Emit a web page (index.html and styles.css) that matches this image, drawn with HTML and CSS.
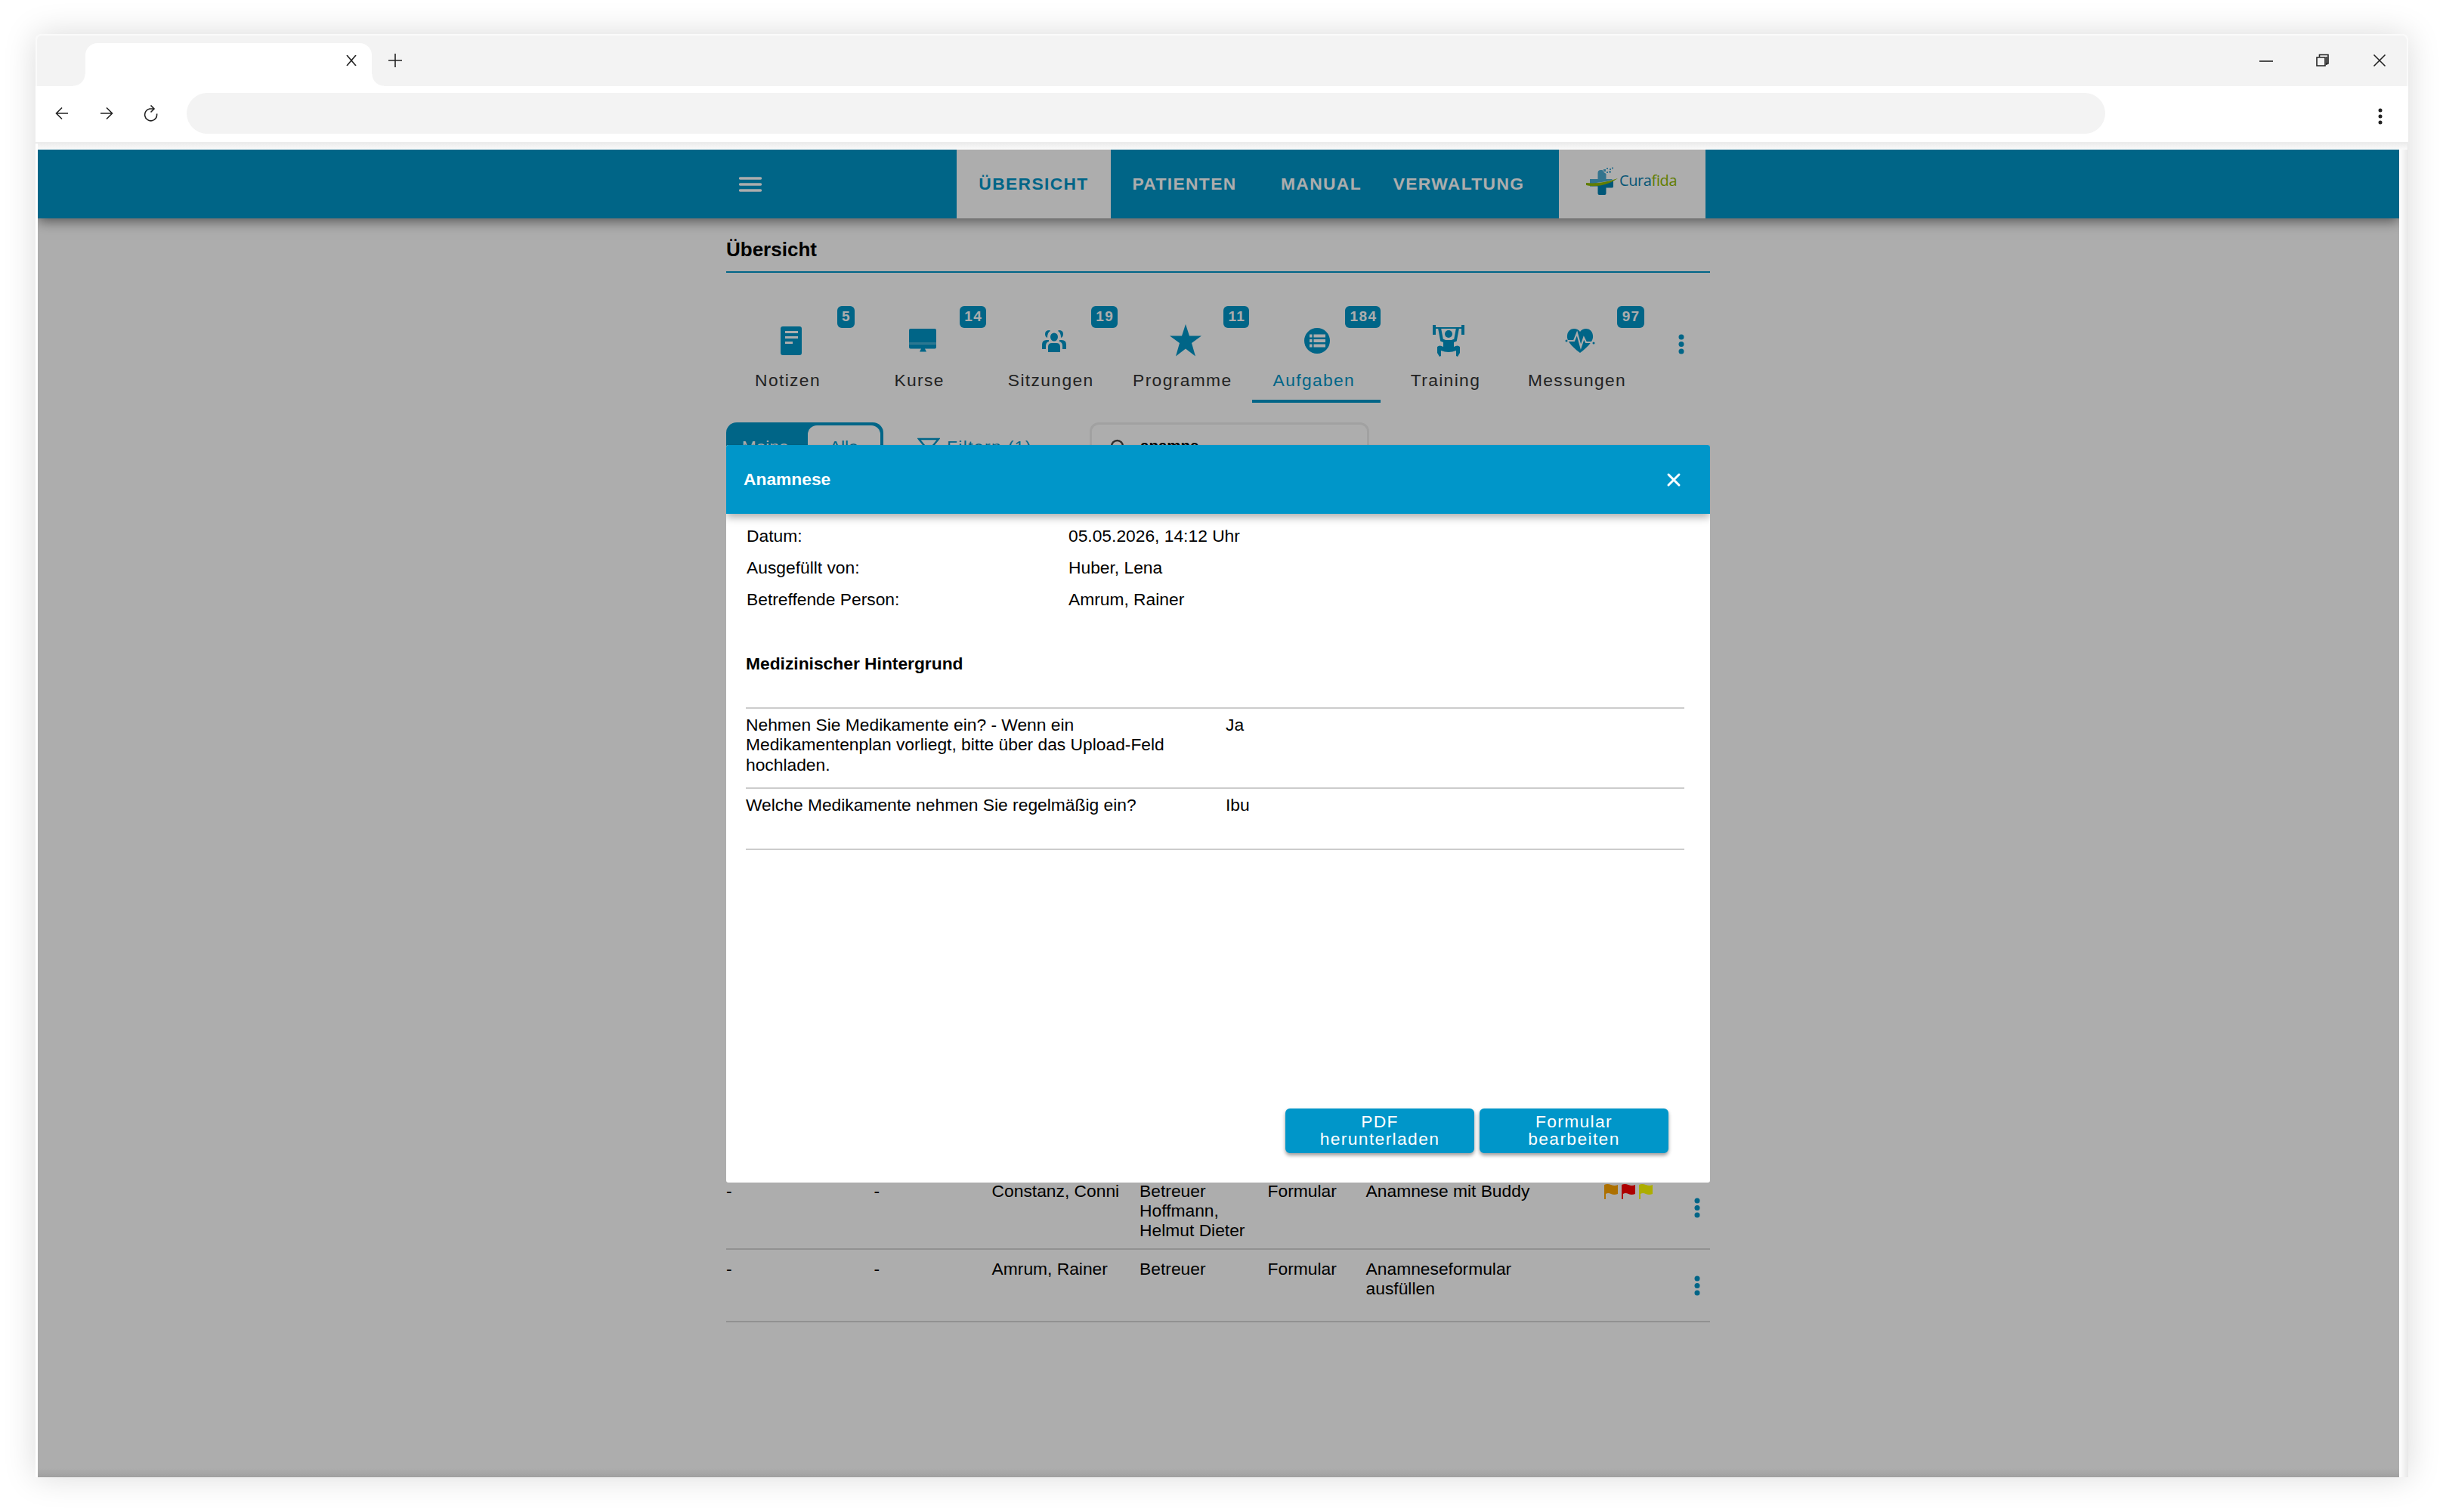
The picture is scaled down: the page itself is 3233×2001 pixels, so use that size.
FILE: index.html
```
<!DOCTYPE html>
<html lang="de">
  <head>
    <meta charset="utf-8">
    <title>Curafida</title>
    <link rel="stylesheet" href="styles.css">
  </head>
  <body>
    <div class="browser">
      <div class="tabstrip">
        <div class="tab">
          <svg width="14" height="14" viewBox="0 0 14 14"><path d="M1 0l12 14M13 0L1 14"/></svg>
        </div>
        <svg class="newtab" width="18" height="18" viewBox="0 0 18 18"><path d="M9 0v18M0 9h18"/></svg>
        <div class="wincontrols">
          <svg width="18" height="18" viewBox="0 0 18 18"><path d="M0 10h18"/></svg>
          <svg width="18" height="18" viewBox="0 0 18 18"><path d="M1 5h11v11H1zM4.500 4V1.500h11.500v11.500h-3"/><path d="M14 4v11"/></svg>
          <svg width="18" height="18" viewBox="0 0 18 18"><path d="M1.500 1.500l15 15M16.500 1.500l-15 15"/></svg>
        </div>
      </div>
      <div class="toolbar">
        <svg width="18" height="18" viewBox="0 0 18 18"><path d="M17 9H1.500M9 1.500L1.500 9 9 16.500"/></svg>
        <svg width="18" height="18" viewBox="0 0 18 18"><path d="M1 9h15.500M9 1.500L16.500 9 9 16.500"/></svg>
        <svg width="20" height="22" viewBox="0 0 20 22"><path d="M13 5H8A8 8 0 1 0 17.500 11.500M9.500 0.500L14 5l-4.500 4.500"/></svg>
        <div class="address"></div>
        <svg class="kebab" width="6" height="22" viewBox="0 0 6 22"><circle cx="3" cy="3" r="2.500"/><circle cx="3" cy="11" r="2.500"/><circle cx="3" cy="19" r="2.500"/></svg>
      </div>

      <div class="page">
        <header class="header">
          <div class="container nav">
            <div class="menu">
              <svg width="30" height="20" viewBox="0 0 30 20"><path d="M1.700 2h26.600M1.700 10h26.600M1.700 18h26.600"/></svg>
            </div>
            <a class="nav-overview active">ÜBERSICHT</a>
            <a class="nav-patients">PATIENTEN</a>
            <a class="nav-manual">MANUAL</a>
            <a class="nav-admin">VERWALTUNG</a>
            <div class="logo">
              <svg width="40" height="42" viewBox="0 0 40 42">
                <path fill="#4cabd1" d="M15.500 9q0-4 4-4h2q2 4 5 5v7h8v6H5v-6h10.500z"/>
                <path fill="#0080b2" d="M5 23q12 1 31-5v9q0 1.500-2 1.500h-7.500V36q0 2-2 2h-7q-2 0-2-2v-9.500H5z"/>
                <path fill="#fff" d="M14 22q12-1 25-5l-2 2q-12 5-24 4.500z"/>
                <path fill="#8fb900" d="M0 22q20 2 42-6-10 7-23 9.500Q5 27 0 25z"/>
                <path fill="#4cabd1" d="M23 4h3v3h-3zM27 2h2v2h-2zM27 7h2v2h-2zM31 3h2v2h-2zM34 1.500h2v2h-2zM30 6.500h3v2h-3z"/>
              </svg>
              <span class="logo-text">Cura<b>fida</b></span>
            </div>
          </div>
        </header>

        <main class="container">
          <h1>Übersicht</h1>
          <div class="tiles">
            <div class="tile">
              <span class="badge">5</span>
              <svg viewBox="0 0 42 42"><path fill-rule="evenodd" d="M10 2h22q3 0 3 3v32q0 3-3 3H10q-3 0-3-3V5q0-3 3-3zM13 8v3h17V8zM13 15v3h17v-3zM13 22v3h10v-3z"/></svg>
              <span class="label">Notizen</span>
            </div>
            <div class="tile">
              <span class="badge">14</span>
              <svg viewBox="0 0 42 42"><path d="M5 5h32q2 0 2 2v16H3V7q0-2 2-2z"/><path opacity=".75" d="M3 23h36v2.500H3z"/><path d="M3 25.500h36v4q0 2-2 2H24l2 4h-9l2-4H5q-2 0-2-2z"/></svg>
              <span class="label">Kurse</span>
            </div>
            <div class="tile">
              <span class="badge">19</span>
              <svg viewBox="0 0 42 42"><ellipse cx="21" cy="16" rx="5" ry="5.500"/><path d="M13 36v-7q0-5 5-5h6q5 0 5 5v7zM5 32v-6q0-6 6-6h3v2q-4 1-4 6v4zM37 32v-6q0-6-6-6h-3v2q4 1 4 6v4z"/><path d="M15 7q-6 0-6 5 0 4 3 5 0-7 4-9zM27 7q6 0 6 5 0 4-3 5 0-7-4-9z"/></svg>
              <span class="label">Sitzungen</span>
            </div>
            <div class="tile">
              <span class="badge">11</span>
              <svg viewBox="0 0 42 42"><path d="M21 -1l5 15.500h16l-13 9.500 5 17.500-13-10-13 10 5-17.500L0 14.500h16z"/></svg>
              <span class="label">Programme</span>
            </div>
            <div class="tile selected">
              <span class="badge">184</span>
              <svg viewBox="0 0 42 42"><circle cx="21" cy="21" r="17"/><path class="cut" d="M11 14.500h3.500M16.500 14.500H32M11 21h3.500M16.500 21H32M11 27.500h3.500M16.500 27.500H32"/></svg>
              <span class="label">Aufgaben</span>
            </div>
            <div class="tile">
              <svg viewBox="0 0 42 42"><circle cx="21" cy="12" r="5"/><path class="line" d="M1 4h40"/><path class="bar" d="M2 0v13M40 0v13"/><path class="arm" d="M9 4l3 16 5 2h8l5-2 3-16"/><path d="M14 20h14v9q5-3 8 0v8l-3 5-2-1V34q-10 4-20 0v7l-2 1-3-5v-8q3-3 8 0z"/></svg>
              <span class="label">Training</span>
            </div>
            <div class="tile">
              <span class="badge">97</span>
              <svg viewBox="0 0 42 42"><path d="M21 37C8 27 3 20 4 14 5 3 17 3 21 9 25 3 37 3 38 14c1 6-4 13-17 23z"/><path class="pulse" d="M3 21h10l4-10 5 18 4-12 3 6h10"/><circle cx="3" cy="21" r="1.500"/><circle cx="39" cy="24" r="1.500"/></svg>
              <span class="label">Messungen</span>
            </div>
            <svg class="more" viewBox="0 0 8 28"><circle cx="4" cy="4" r="3.500"/><circle cx="4" cy="13.500" r="3.500"/><circle cx="4" cy="23" r="3.500"/></svg>
          </div>

          <div class="filters">
            <div class="toggle"><span class="on">Meine</span><span class="off">Alle</span></div>
            <div class="filter">
              <svg width="30" height="26" viewBox="0 0 30 26"><path d="M2 2h26l-9 11v9l-8 2V13z"/></svg>
              Filtern (1)
            </div>
            <div class="search">
              <svg width="24" height="26" viewBox="0 0 24 26"><circle cx="9.500" cy="9.500" r="7.500"/><path d="M15 15l7 8"/></svg>
              <span>anamne</span>
            </div>
          </div>

          <div class="list">
            <div class="row">
              <span>-</span><span>-</span><span>Constanz, Conni</span><span>Betreuer Hoffmann, Helmut Dieter</span><span>Formular</span>
              <span class="task">Anamnese mit Buddy</span>
              <span class="flags">
                <svg class="orange" viewBox="0 0 18 20"><path d="M0 1q4-2 9 0t9 0v12q-5 2-9 0t-7 0v7H0z"/></svg>
                <svg class="red" viewBox="0 0 18 20"><path d="M0 1q4-2 9 0t9 0v12q-5 2-9 0t-7 0v7H0z"/></svg>
                <svg class="yellow" viewBox="0 0 18 20"><path d="M0 1q4-2 9 0t9 0v12q-5 2-9 0t-7 0v7H0z"/></svg>
              </span>
              <svg class="dots" viewBox="0 0 8 28"><circle cx="4" cy="4" r="3.500"/><circle cx="4" cy="13.500" r="3.500"/><circle cx="4" cy="23" r="3.500"/></svg>
            </div>
            <div class="row">
              <span>-</span><span>-</span><span>Amrum, Rainer</span><span>Betreuer</span><span>Formular</span>
              <span class="task">Anamneseformular ausfüllen</span>
              <span></span>
              <svg class="dots" viewBox="0 0 8 28"><circle cx="4" cy="4" r="3.500"/><circle cx="4" cy="13.500" r="3.500"/><circle cx="4" cy="23" r="3.500"/></svg>
            </div>
          </div>
        </main>

        <div class="backdrop">
          <div class="modal">
            <div class="modal-head">
              <span>Anamnese</span>
              <svg width="20" height="20" viewBox="0 0 20 20"><path d="M3 3l14 14M17 3L3 17"/></svg>
            </div>
            <div class="modal-body">
              <dl class="meta">
                <dt>Datum:</dt><dd>05.05.2026, 14:12 Uhr</dd>
                <dt>Ausgefüllt von:</dt><dd>Huber, Lena</dd>
                <dt>Betreffende Person:</dt><dd>Amrum, Rainer</dd>
              </dl>
              <h2>Medizinischer Hintergrund</h2>
              <div class="answers">
                <div class="qa first"><span>Nehmen Sie Medikamente ein? - Wenn ein Medikamentenplan vorliegt, bitte über das Upload-Feld hochladen.</span><span>Ja</span></div>
                <div class="qa second"><span>Welche Medikamente nehmen Sie regelmäßig ein?</span><span>Ibu</span></div>
              </div>
            </div>
            <div class="modal-foot">
              <button>PDF<br>herunterladen</button>
              <button>Formular<br>bearbeiten</button>
            </div>
          </div>
        </div>
      </div>
    </div>
  </body>
</html>
```

FILE: styles.css
```
* {
  box-sizing: border-box;
}
body {
  margin: 0;
  width: 3233px;
  height: 2001px;
  overflow: hidden;
  background-color: #fff;
  font-family: "Liberation Sans", Arial, sans-serif;
  font-size: 22.8px;
  line-height: 26.1px;
  color: #000;
}
svg {
  display: block;
  flex: none;
}

/* browser window */
.browser {
  width: 3140px;
  height: 1910px;
  margin: 45px 0 0 47px;
  border-radius: 8px 8px 0 0;
  background-color: #fff;
  box-shadow: 0 0 44px rgba(0, 0, 0, 0.15);
}
.tabstrip {
  display: flex;
  height: 69px;
  padding: 10px 37px 0 64px;
  border: 2px solid #fafafa;
  border-bottom: 0;
  border-radius: 8px 8px 0 0;
  background-color: #f3f3f3;
}
.tabstrip svg,
.toolbar svg {
  fill: none;
  stroke: #222;
  stroke-width: 1.6;
}
.tab {
  position: relative;
  width: 379px;
  height: 57px;
  padding: 16px 20px 0 0;
  border-radius: 16px 16px 0 0;
  background-color: #fff;
}
.tab svg {
  margin-left: auto;
}
.tab::before,
.tab::after {
  content: "";
  position: absolute;
  bottom: 0;
  width: 16px;
  height: 16px;
}
.tab::before {
  left: -16px;
  background: radial-gradient(circle at 0 0, #f3f3f3 15px, #fff 16px);
}
.tab::after {
  right: -16px;
  background: radial-gradient(circle at 100% 0, #f3f3f3 15px, #fff 16px);
}
.newtab {
  margin: 14px 0 0 22px;
}
.wincontrols {
  display: flex;
  gap: 57px;
  margin-left: auto;
  padding: 14px 0 0;
  margin-right: -10px;
}
.toolbar {
  display: flex;
  align-items: center;
  height: 76px;
  padding: 0 34px 3px 26px;
  border-bottom: 2px solid #ececec;
}
.toolbar svg {
  margin-right: 40.5px;
}
.toolbar svg:nth-child(3) {
  margin-right: 37px;
}
.address {
  width: 2539px;
  height: 54px;
  border-radius: 27px;
  background-color: #f3f3f3;
}
.toolbar .kebab {
  margin: 8px 0 0 auto;
  fill: #222;
  stroke: none;
}

/* page */
.page {
  position: relative;
  width: 3137px;
  height: 1765px;
  margin-left: 3px;
  padding-top: 8px;
  padding-right: 12px;
  background: linear-gradient(to right, #fff 3125px, #e9e9e9 3136px);
}
.page::before {
  content: "";
  position: absolute;
  top: 0;
  left: 0;
  width: 3136px;
  height: 8px;
  background: linear-gradient(#ededed, #fbfbfb);
}
.container {
  width: 1302px;
  margin-left: 911px;
}
.header {
  height: 91px;
  background-color: #0096c8;
  box-shadow: 0 4px 16px rgba(0, 0, 0, 0.5);
  clip-path: inset(0 0 -40px 0);
}
.nav {
  display: flex;
  height: 91px;
  font-weight: bold;
  letter-spacing: 1.37px;
  color: #fff;
}
.nav a {
  display: flex;
  align-items: center;
  justify-content: center;
}
.menu {
  display: flex;
  align-items: center;
  width: 305px;
  padding-left: 17px;
}
.menu path {
  stroke: #fff;
  stroke-width: 3.6;
  stroke-linecap: round;
}
.nav .nav-overview {
  width: 204px;
}
.nav .active {
  background-color: #fff;
  color: #0096c8;
}
.nav-patients {
  width: 195px;
}
.nav-manual {
  width: 167px;
}
.nav-admin {
  width: 197px;
}
.logo {
  display: flex;
  width: 194px;
  margin-left: auto;
  margin-right: 6px;
  padding: 22px 0 0 36px;
  background-color: #fff;
}
.logo svg {
  overflow: visible;
}
.logo-text {
  margin: 5px 0 0 4px;
  color: #0a7fae;
  font-family: "Open Sans", sans-serif;
  font-size: 20px;
  font-weight: normal;
  line-height: 28px;
  letter-spacing: -0.4px;
}
.logo-text b {
  color: #8fb900;
  font-weight: normal;
}
h1 {
  margin: 0;
  padding: 27px 0 14px;
  border-bottom: 2px solid #0096c8;
  font-size: 26px;
  line-height: 29px;
}

/* tiles */
.tiles {
  display: flex;
  gap: 4.1px;
  height: 172px;
}
.tile {
  position: relative;
  display: flex;
  flex-direction: column;
  align-items: center;
  width: 170px;
  padding-top: 69px;
  color: #333;
  letter-spacing: 1.37px;
}
.tile svg {
  width: 42px;
  height: 42px;
  margin-left: 1px;
  overflow: visible;
  fill: #0096c8;
}
.tile .label {
  margin: 18px 7px 0 0;
}
.badge {
  position: absolute;
  top: 44px;
  right: 0;
  height: 29px;
  padding: 0 5px 0 6.5px;
  border-radius: 6px;
  background-color: #0096c8;
  color: #fff;
  font-size: 19px;
  font-weight: bold;
  line-height: 27px;
}
.selected {
  border-bottom: 4px solid #0096c8;
  color: #0096c8;
}
.tile .cut {
  stroke: #fff;
  stroke-width: 4;
}
.line {
  stroke: #0096c8;
  stroke-width: 2;
}
.bar {
  stroke: #0096c8;
  stroke-width: 4;
}
.arm {
  fill: none;
  stroke: #0096c8;
  stroke-width: 4;
}
.pulse {
  fill: none;
  stroke: #fff;
  stroke-width: 2.2;
}
.more {
  width: 8px;
  height: 28px;
  margin: 81px 0 0 41px;
  fill: #0096c8;
}

/* filters */
.filters {
  display: flex;
  height: 66px;
  margin-top: 26px;
  color: #0096c8;
}
.toggle {
  display: flex;
  width: 208px;
  padding: 4px;
  border-radius: 14px;
  background-color: #0096c8;
  line-height: 56px;
  text-align: center;
}
.toggle .on {
  width: 104px;
  padding-right: 8px;
  color: #fff;
}
.toggle .off {
  width: 97px;
  border-radius: 12px;
  background-color: #fff;
}
.filter {
  display: flex;
  gap: 9px;
  width: 228px;
  margin-left: 45px;
  letter-spacing: 1.37px;
  line-height: 64px;
}
.filter svg,
.search svg {
  margin-top: 20px;
  fill: none;
  stroke: #0096c8;
  stroke-width: 2.4;
}
.search {
  display: flex;
  width: 370px;
  padding-left: 24px;
  border: 3px solid #eee;
  border-radius: 12px;
  color: #000;
  font-size: 20.5px;
  font-weight: bold;
  line-height: 56px;
}
.search svg {
  margin: 19px 16px 0 0;
  stroke: #444;
}

/* list */
.list {
  margin-top: 926px;
}
.row {
  display: grid;
  grid-template-columns: 195.6px 156px 195.5px 169.5px 130px 315px 119.5px 8px;
  padding: 12px 0 11px;
  border-bottom: 2px solid #d6d6d6;
}
.row + .row {
  height: 96px;
}
.task {
  padding-right: 60px;
}
.flags {
  display: flex;
  gap: 5px;
  padding-top: 4px;
}
.flags svg {
  width: 18px;
  height: 20px;
}
.orange {
  fill: orange;
}
.red {
  fill: red;
}
.yellow {
  fill: yellow;
}
.dots {
  width: 8px;
  height: 28px;
  margin-top: 22px;
  fill: #0096c8;
}

/* modal */
.backdrop {
  position: absolute;
  top: 8px;
  left: 0;
  display: flex;
  align-items: center;
  width: 3125px;
  height: 1757px;
  padding-left: 911px;
  overflow: hidden;
  background: linear-gradient(transparent 1745px, rgba(0, 0, 0, 0.08)), rgba(0, 0, 0, 0.32);
}
.modal {
  position: relative;
  display: flex;
  flex-direction: column;
  width: 1302px;
  height: 976px;
  border-radius: 3px;
  background-color: #fff;
}
.modal::before {
  content: "";
  position: absolute;
  z-index: -1;
  top: 190px;
  left: 0;
  width: 1302px;
  height: 715px;
  box-shadow: 0 0 78px rgba(0, 0, 0, 0.4);
}
.modal-head {
  display: flex;
  align-items: center;
  justify-content: space-between;
  height: 91px;
  padding: 0 38px 0 23px;
  border-radius: 3px 3px 0 0;
  background-color: #0096c9;
  box-shadow: 0 4px 12px rgba(0, 0, 0, 0.35);
  clip-path: inset(0 0 -30px 0);
  color: #fff;
  font-weight: bold;
}
.modal-head svg {
  margin-top: 1px;
}
.modal-head path {
  stroke: #fff;
  stroke-width: 3;
  stroke-linecap: round;
}
.modal-body {
  flex: 1;
  padding: 8px 34px 0 26px;
}
.meta {
  display: grid;
  grid-template-columns: 426px 1fr;
  margin: 0 0 0 1px;
  line-height: 42.3px;
}
.meta dd {
  margin: 0;
}
h2 {
  margin: 51px 0 0;
  padding-bottom: 45px;
  border-bottom: 2px solid #ccc;
  font-size: 22.8px;
  line-height: 26px;
}
.qa {
  display: grid;
  grid-template-columns: 635px 1fr;
  padding: 8px 0;
  border-bottom: 2px solid #ccc;
}
.qa span:first-child {
  padding-right: 70px;
}
.first {
  height: 106px;
}
.second {
  height: 81px;
}
.modal-foot {
  display: flex;
  justify-content: flex-end;
  gap: 7px;
  padding: 0 55px 39px 0;
}
.modal-foot button {
  width: 250px;
  height: 59px;
  padding: 0 0 1px;
  border: 0;
  border-radius: 6px;
  background-color: #0096c9;
  box-shadow: 0 3px 5px rgba(0, 0, 0, 0.4);
  color: #fff;
  font-family: inherit;
  font-size: 22.8px;
  line-height: 23px;
  letter-spacing: 1.37px;
}
```
